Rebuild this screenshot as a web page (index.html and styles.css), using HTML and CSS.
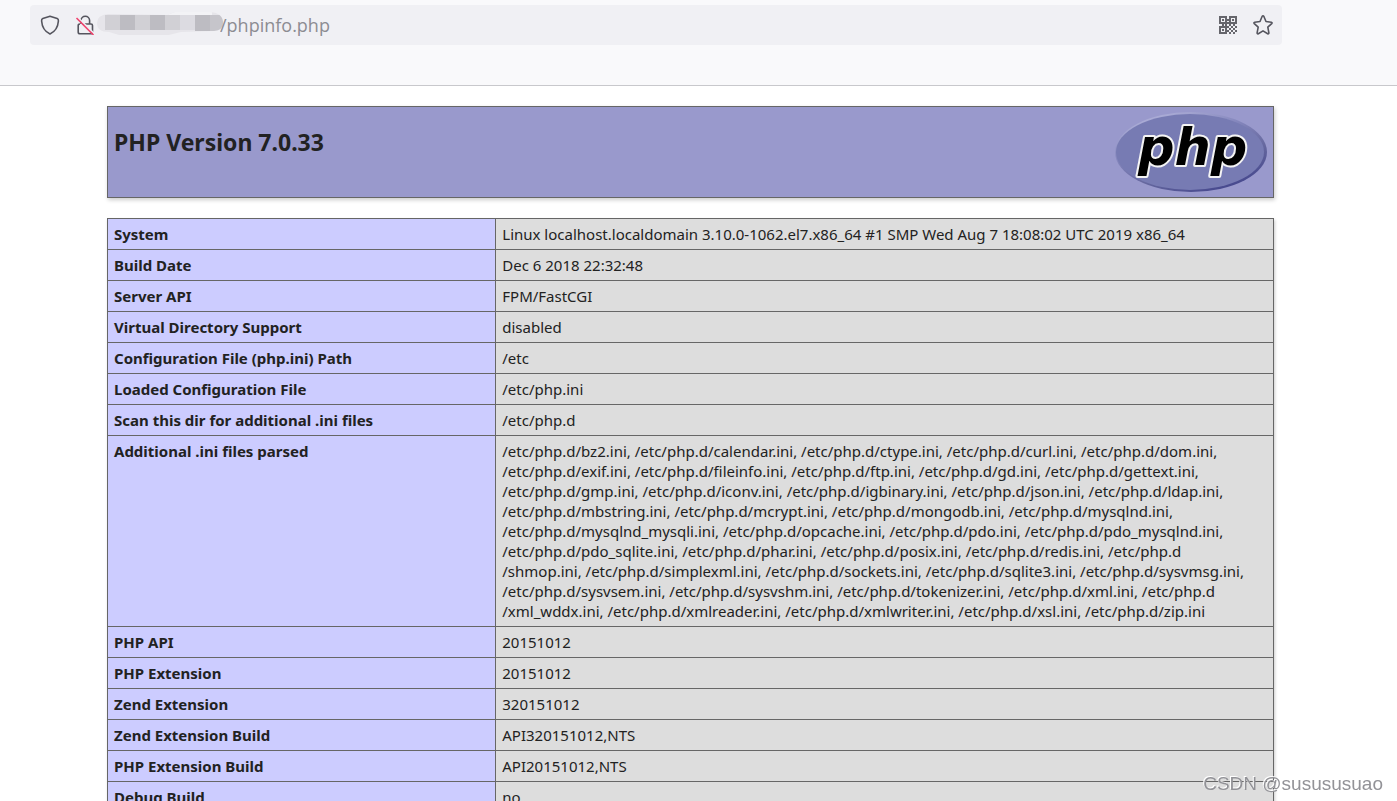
FILE: index.html
```html
<!DOCTYPE html>
<html lang="en">
<head>
<meta charset="utf-8">
<title>phpinfo()</title>
<link rel="stylesheet" href="styles.css">
</head>
<body>
<header class="toolbar">
  <div class="address">
    <svg class="icon" viewBox="0 0 20 20" aria-hidden="true"><path d="M10 1.2 17.2 3.6Q18.6 4.2 18.4 6C17.9 12.5 14.8 16.8 10 18.9 5.200 16.8 2.100 12.5 1.600 6Q1.400 4.200 2.800 3.600Z"/></svg>
    <svg class="icon lock" viewBox="0 0 20 20" aria-hidden="true"><path d="M6 9V5.500a4.300 4.300 0 0 1 8.600 0V9M7.500 9H16q1.500 0 1.500 1.500V17q0 1.800-1.800 1.800H5q-1.800 0-1.800-1.800v-6.500Q3.200 9 5 9"/><path class="halo" d="M2.500 2 19.500 19"/><path class="slash" d="M1.500 3 18.500 20"/></svg>
    <svg class="mosaic" viewBox="0 0 126 23" aria-hidden="true">
      <defs><clipPath id="smear"><path d="M11 2 70 3 78 0H113Q126 1 126 11 126 18 117 19L84 20 72 23H22L12 20Q0 20 0 11 0 3 11 2Z"/></clipPath></defs>
      <g clip-path="url(#smear)">
        <path fill="#e6e5ea" d="M0 0h126v23H0z"/>
        <path fill="#f3f3f6" d="M70 0h45v3H70z"/>
        <path fill="#d1d0d5" d="M8 3h15v15H8zM38 3h15v15H38zM68 3h15v15H68z"/>
        <path fill="#bdbcc2" d="M23 3h15v15H23zM53 3h15v15H53zM98 3h15v16H98z"/>
        <path fill="#dcdbe1" d="M83 3h15v15H83z"/>
        <path fill="#c6c5cb" d="M113 3h13v16h-13z"/>
      </g>
    </svg>
    <input class="url" type="text" aria-label="Address" value="/phpinfo.php">
    <button class="tool" type="button" aria-label="QR code">
      <svg class="qr" viewBox="0 0 18 18" aria-hidden="true"><path class="frame" d="M1 1h6v6H1zM11 1h6v6h-6zM1 11h6v6H1z"/><path class="dots" d="M3 3h2v2H3zM13 3h2v2h-2zM3 13h2v2H3zM8 3h2v2H8zM3 8h2v2H3zM6 8h2v2H6zM8 6h2v2H8zM10 8h2v2h-2zM14 8h2v2h-2zM8 10h2v2H8zM12 10h2v2h-2zM16 10h2v2h-2zM10 12h2v2h-2zM14 12h2v2h-2zM8 14h2v2H8zM12 14h2v2h-2zM16 14h2v2h-2zM10 16h2v2h-2zM14 16h2v2h-2z"/></svg>
    </button>
    <button class="tool" type="button" aria-label="Bookmark this page">
      <svg class="icon" viewBox="0 0 20 20" aria-hidden="true"><path d="M9.100 1.500Q10 .1 10.900 1.500L13 6.500 18.300 7.200Q19.600 7.600 18.700 8.600L14.800 12.200 15.900 17.800Q15.900 19.200 14.700 18.700L10 15.900 5.300 18.700Q4.100 19.200 4.100 17.800L5.200 12.200 1.300 8.600Q.4 7.600 1.700 7.200L7 6.500Z"/></svg>
    </button>
  </div>
</header>
<main class="page">
  <div class="banner">
    <h1 class="title">PHP Version 7.0.33</h1>
    <svg class="logo" viewBox="0 0 152 80" role="img" aria-label="PHP logo">
      <defs>
        <linearGradient id="rim" x1="0.200" y1="0" x2="0.800" y2="1"><stop offset="0" stop-color="#b4b5dc"/><stop offset=".35" stop-color="#8587bd"/><stop offset=".65" stop-color="#66689f"/><stop offset="1" stop-color="#40428a"/></linearGradient>
      </defs>
      <ellipse cx="76" cy="40" rx="76" ry="40" fill="url(#rim)"/>
      <ellipse cx="75" cy="40" rx="74" ry="38" fill="#777bb3"/>
      <text class="wordmark" x="23" y="53">php</text>
    </svg>
  </div>
  <table class="info">
    <tr><th scope="row">System</th><td>Linux localhost.localdomain 3.10.0-1062.el7.x86_64 #1 SMP Wed Aug 7 18:08:02 UTC 2019 x86_64</td></tr>
    <tr><th scope="row">Build Date</th><td>Dec 6 2018 22:32:48</td></tr>
    <tr><th scope="row">Server API</th><td>FPM/FastCGI</td></tr>
    <tr><th scope="row">Virtual Directory Support</th><td>disabled</td></tr>
    <tr><th scope="row">Configuration File (php.ini) Path</th><td>/etc</td></tr>
    <tr><th scope="row">Loaded Configuration File</th><td>/etc/php.ini</td></tr>
    <tr><th scope="row">Scan this dir for additional .ini files</th><td>/etc/php.d</td></tr>
    <tr><th scope="row">Additional .ini files parsed</th><td class="files">/etc/php.d/bz2.ini, /etc/php.d/calendar.ini, /etc/php.d/ctype.ini, /etc/php.d/curl.ini, /etc/php.d/dom.ini,<br>/etc/php.d/exif.ini, /etc/php.d/fileinfo.ini, /etc/php.d/ftp.ini, /etc/php.d/gd.ini, /etc/php.d/gettext.ini,<br>/etc/php.d/gmp.ini, /etc/php.d/iconv.ini, /etc/php.d/igbinary.ini, /etc/php.d/json.ini, /etc/php.d/ldap.ini,<br>/etc/php.d/mbstring.ini, /etc/php.d/mcrypt.ini, /etc/php.d/mongodb.ini, /etc/php.d/mysqlnd.ini,<br>/etc/php.d/mysqlnd_mysqli.ini, /etc/php.d/opcache.ini, /etc/php.d/pdo.ini, /etc/php.d/pdo_mysqlnd.ini,<br>/etc/php.d/pdo_sqlite.ini, /etc/php.d/phar.ini, /etc/php.d/posix.ini, /etc/php.d/redis.ini, /etc/php.d<br>/shmop.ini, /etc/php.d/simplexml.ini, /etc/php.d/sockets.ini, /etc/php.d/sqlite3.ini, /etc/php.d/sysvmsg.ini,<br>/etc/php.d/sysvsem.ini, /etc/php.d/sysvshm.ini, /etc/php.d/tokenizer.ini, /etc/php.d/xml.ini, /etc/php.d<br>/xml_wddx.ini, /etc/php.d/xmlreader.ini, /etc/php.d/xmlwriter.ini, /etc/php.d/xsl.ini, /etc/php.d/zip.ini</td></tr>
    <tr><th scope="row">PHP API</th><td>20151012</td></tr>
    <tr><th scope="row">PHP Extension</th><td>20151012</td></tr>
    <tr><th scope="row">Zend Extension</th><td>320151012</td></tr>
    <tr><th scope="row">Zend Extension Build</th><td>API320151012,NTS</td></tr>
    <tr><th scope="row">PHP Extension Build</th><td>API20151012,NTS</td></tr>
    <tr><th scope="row">Debug Build</th><td>no</td></tr>
  </table>
</main>
<div class="watermark">CSDN @susususuao</div>
</body>
</html>
```
FILE: styles.css
```css
* { box-sizing: border-box; }
body {
  margin: 0;
  height: 100vh;
  overflow: hidden;
  background: #fff;
  color: #222;
  font: 15px/20px "Segoe UI", "Noto Sans", sans-serif;
}
.toolbar {
  height: 86px;
  padding: 5px 115px 0 30px;
  background: #f9f9fb;
  border-bottom: 1px solid #c8c8cc;
}
.address {
  display: flex;
  align-items: center;
  height: 40px;
  padding: 0 9px 0 10px;
  background: #f0f0f4;
  border-radius: 4px;
}
.icon {
  flex: none;
  width: 20px;
  height: 20px;
  fill: none;
  stroke: #55555e;
  stroke-width: 1.6;
  stroke-linejoin: round;
}
.lock { margin-left: 15px; }
.lock .halo { stroke: #f0f0f4; }
.lock .slash { stroke: #f0436e; }
.mosaic {
  flex: none;
  width: 126px;
  height: 23px;
  margin: 0 -3px 3px 2px;
}
.url {
  flex: 1;
  min-width: 0;
  padding: 0;
  border: 0;
  background: none;
  color: #8c8c92;
  font: 18px/24px "Segoe UI", "Open Sans", "Noto Sans", sans-serif;
}
.tool {
  display: flex;
  margin-left: 16px;
  padding: 0;
  border: 0;
  background: none;
}
.qr { width: 18px; height: 18px; }
.qr .frame { fill: none; stroke: #66666c; stroke-width: 2; }
.qr .dots { fill: #66666c; }
.page {
  padding: 20px 123px 0 107px;
}
.banner {
  display: flex;
  justify-content: space-between;
  align-items: flex-start;
  height: 92px;
  margin-bottom: 20px;
  padding: 5px 6px;
  background: #99c;
  border: 1px solid #666;
  box-shadow: 1px 2px 4px #ccc;
}
.title {
  margin: 14px 0 0;
  font-size: 23px;
  line-height: 32px;
}
.logo { width: 152px; height: 80px; }
.wordmark {
  font: italic 700 51px "DejaVu Sans", sans-serif;
  fill: #000;
  stroke: #f4f4f4;
  stroke-width: 4px;
  stroke-linejoin: round;
  paint-order: stroke;
}
.info {
  width: 100%;
  table-layout: fixed;
  border-collapse: collapse;
  box-shadow: 1px 2px 3px #ccc;
}
.info th, .info td {
  padding: 5px 6px;
  border: 1px solid #666;
  text-align: left;
  vertical-align: top;
}
.info th {
  width: 33.3%;
  background: #ccf;
}
.info td { background: #ddd; }
.files { white-space: nowrap; }
.watermark {
  position: fixed;
  right: 14px;
  bottom: 5px;
  color: #929297;
  font: 19px/24px "Liberation Sans", Arial, sans-serif;
  text-shadow: -1px -1px 0 #fff;
}
```
